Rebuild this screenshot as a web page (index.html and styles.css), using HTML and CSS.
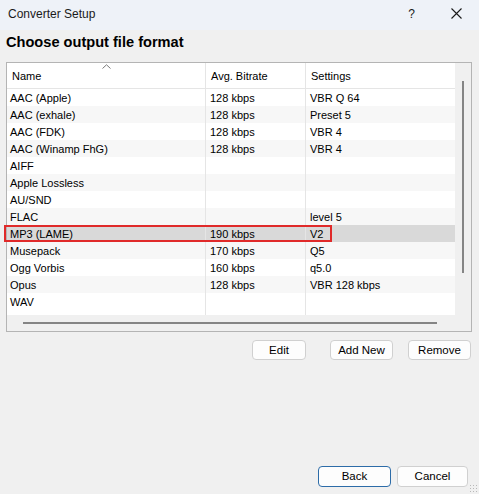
FILE: index.html
```html
<!DOCTYPE html>
<html>
<head>
<meta charset="utf-8">
<link rel="stylesheet" href="styles.css">
</head>
<body>
<div class="window">
  <div class="titlebar">
    <span class="title">Converter Setup</span>
    <span class="help">?</span>
    <svg class="close" width="11" height="11" viewBox="0 0 11 11"><path d="M0.5 0.5 L10.5 10.5 M10.5 0.5 L0.5 10.5" stroke="#1a1a1a" stroke-width="1.1" fill="none"/></svg>
  </div>
  <h1 class="heading">Choose output file format</h1>
  <div class="listbox">
    <div class="listarea">
      <div class="table">
        <div class="hdr">
          <div class="hcell c1">Name<svg class="sort" width="9" height="5" viewBox="0 0 9 5"><path d="M0.5 4.5 L4.5 0.8 L8.5 4.5" stroke="#7a7a7a" stroke-width="1" fill="none"/></svg></div>
          <div class="hcell c2">Avg. Bitrate</div>
          <div class="hcell c3">Settings</div>
        </div>
        <div class="rows">
          <div class="row"><div class="cell c1">AAC (Apple)</div><div class="cell c2">128 kbps</div><div class="cell c3">VBR Q 64</div></div>
          <div class="row"><div class="cell c1">AAC (exhale)</div><div class="cell c2">128 kbps</div><div class="cell c3">Preset 5</div></div>
          <div class="row"><div class="cell c1">AAC (FDK)</div><div class="cell c2">128 kbps</div><div class="cell c3">VBR 4</div></div>
          <div class="row"><div class="cell c1">AAC (Winamp FhG)</div><div class="cell c2">128 kbps</div><div class="cell c3">VBR 4</div></div>
          <div class="row"><div class="cell c1">AIFF</div><div class="cell c2"></div><div class="cell c3"></div></div>
          <div class="row"><div class="cell c1">Apple Lossless</div><div class="cell c2"></div><div class="cell c3"></div></div>
          <div class="row"><div class="cell c1">AU/SND</div><div class="cell c2"></div><div class="cell c3"></div></div>
          <div class="row"><div class="cell c1">FLAC</div><div class="cell c2"></div><div class="cell c3">level 5</div></div>
          <div class="row selected"><div class="cell c1">MP3 (LAME)</div><div class="cell c2">190 kbps</div><div class="cell c3">V2</div></div>
          <div class="row"><div class="cell c1">Musepack</div><div class="cell c2">170 kbps</div><div class="cell c3">Q5</div></div>
          <div class="row"><div class="cell c1">Ogg Vorbis</div><div class="cell c2">160 kbps</div><div class="cell c3">q5.0</div></div>
          <div class="row"><div class="cell c1">Opus</div><div class="cell c2">128 kbps</div><div class="cell c3">VBR 128 kbps</div></div>
          <div class="row"><div class="cell c1">WAV</div><div class="cell c2"></div><div class="cell c3"></div></div>
          <div class="row filler"><div class="cell c1"></div><div class="cell c2"></div><div class="cell c3"></div></div>
        </div>
      </div>
      <div class="vscroll"><div class="vthumb"></div></div>
    </div>
    <div class="hscroll"><div class="hthumb"></div><div class="corner"></div></div>
    <div class="highlight"></div>
  </div>
  <div class="actions">
    <button class="btn b-edit">Edit</button>
    <button class="btn b-add">Add New</button>
    <button class="btn b-remove">Remove</button>
  </div>
  <div class="spacer"></div>
  <div class="footer">
    <button class="btn b-back">Back</button>
    <button class="btn b-cancel">Cancel</button>
  </div>
  <div class="grip"></div>
</div>
</body>
</html>
```
FILE: styles.css
```css
* { box-sizing: border-box; }
html, body { margin: 0; padding: 0; }
body {
  width: 479px;
  height: 494px;
  overflow: hidden;
  background: #f0f0f0;
  font-family: "Liberation Sans", Arial, sans-serif;
  font-size: 11px;
  color: #000;
}
.window {
  position: relative;
  width: 479px;
  height: 494px;
  display: flex;
  flex-direction: column;
}
.titlebar {
  height: 30px;
  background: #eef2f8;
  display: flex;
  align-items: center;
  padding-left: 8px;
  flex-shrink: 0;
}
.title {
  font-size: 12px;
  color: #1a1a1a;
  flex: 1;
  padding-bottom: 2px;
}
.help {
  font-size: 12px;
  color: #1a1a1a;
  margin-right: 36px;
  padding-bottom: 3px;
}
.close {
  margin-right: 17px;
  margin-bottom: 3px;
}
.heading {
  margin: 2px 0 0 6px;
  font-size: 14.6px;
  font-weight: bold;
  line-height: 20px;
  height: 30px;
}
.listbox {
  position: relative;
  margin: 0 7px 0 6px;
  height: 270px;
  border: 1px solid #b4b4b4;
  background: #ffffff;
  display: flex;
  flex-direction: column;
  flex-shrink: 0;
}
.listarea {
  display: flex;
  height: 252px;
}
.table {
  flex: 1;
  display: flex;
  flex-direction: column;
}
.hdr {
  display: flex;
  height: 26px;
  border-bottom: 1px solid #e5e5e5;
}
.hcell {
  position: relative;
  display: flex;
  align-items: center;
  padding-left: 5px;
}
.c1 { width: 198px; }
.c2 { width: 100px; border-left: 1px solid #e5e5e5; }
.c3 { flex: 1; border-left: 1px solid #e5e5e5; }
.sort {
  position: absolute;
  left: 95px;
  top: 1px;
}
.rows {
  flex: 1;
  display: flex;
  flex-direction: column;
}
.row {
  display: flex;
  height: 17px;
}
.row:nth-child(even) { background: #f7f7f7; }
.row.selected { background: #d9d9d9; }
.row.filler { flex: 1; height: auto; background: #fff; }
.cell {
  display: flex;
  align-items: center;
  white-space: nowrap;
}
.cell.c1 { padding-left: 3px; }
.cell.c2 { padding-left: 4px; }
.cell.c3 { padding-left: 4px; }
.vscroll {
  width: 16px;
  background: #f0f0f0;
  position: relative;
  flex-shrink: 0;
}
.vthumb {
  margin: 18px 0 0 7px;
  width: 2px;
  height: 192px;
  background: #858585;
}
.hscroll {
  height: 16px;
  background: #f0f0f0;
  display: flex;
  align-items: center;
}
.hthumb {
  margin-left: 16px;
  width: 414px;
  height: 2px;
  background: #858585;
}
.corner { flex: 1; }
.highlight {
  position: absolute;
  left: -3px;
  top: 162px;
  width: 328px;
  height: 17px;
  border: 2px solid #e02a2a;
}
.actions {
  display: flex;
  margin-top: 8px;
  padding-left: 252px;
  flex-shrink: 0;
}
.btn {
  height: 20px;
  border: 1px solid #d0d0d0;
  border-radius: 4px;
  background: #fdfdfd;
  font-family: "Liberation Sans", Arial, sans-serif;
  font-size: 11.5px;
  color: #000;
  padding: 0 0 1px 0;
  margin: 0;
}
.b-edit { width: 54px; }
.b-add { width: 63px; margin-left: 24px; }
.b-remove { width: 63px; margin-left: 15px; }
.spacer { flex: 1; }
.footer {
  display: flex;
  padding-left: 318px;
  margin-bottom: 7px;
  flex-shrink: 0;
}
.b-back { width: 73px; height: 21px; border-color: #2d6ca8; }
.b-cancel { width: 71px; height: 21px; margin-left: 6px; }
.grip {
  position: absolute;
  right: 2px;
  bottom: 2px;
  width: 8px;
  height: 8px;
  background-image: radial-gradient(circle, #b8b8b8 0.8px, transparent 1px);
  background-size: 3px 3px;
}
```
